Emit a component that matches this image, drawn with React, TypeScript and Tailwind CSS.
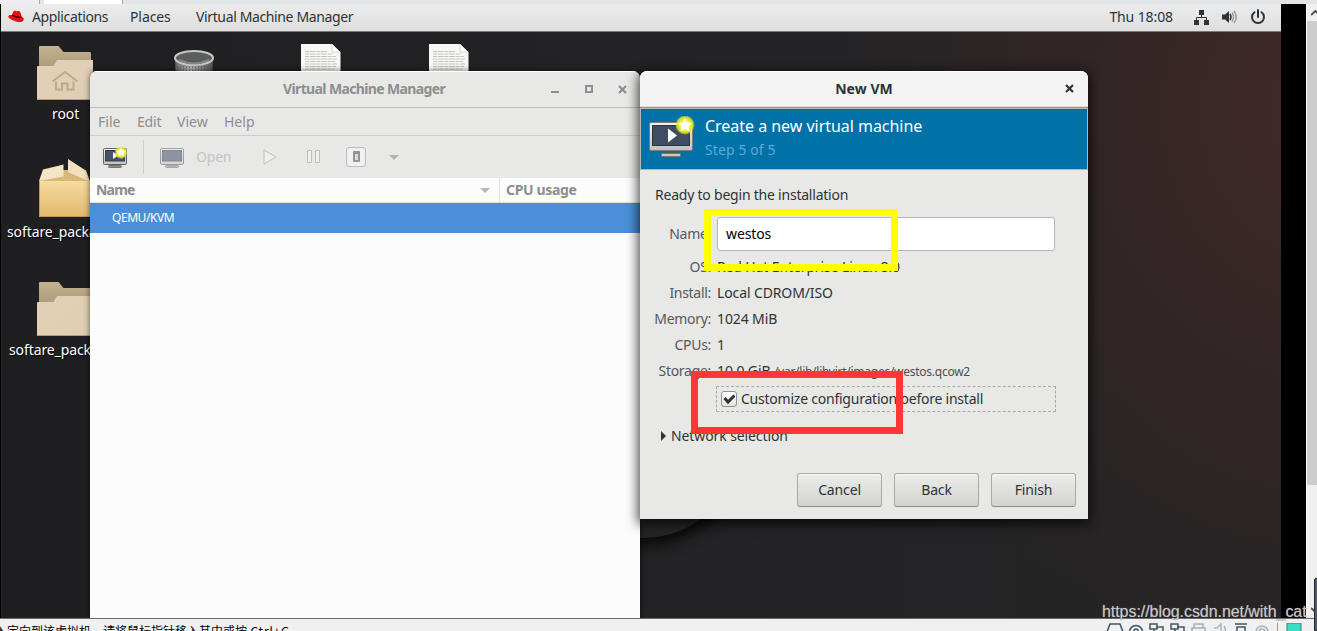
import type { ReactNode } from "react";

function HatIcon() {
  return (
    <svg className="h-[15px] w-[17px]" viewBox="0 0 17 15">
      <path
        d="M1 6.500c1-.6 2-.6 3-.3L5.200 3c.5-1.300 1.600-1.400 2.700-.9.700.3 1.200.2 1.900 0 1.300-.4 2.300.3 2.700 1.500l1.200 4.200c1.700.9 2.400 2.200 1.900 3.500-.7 1.700-3.300 2.200-6.600 1.400C4.400 11.600.7 9.500.3 7.800c-.1-.6.200-1 .7-1.300z"
        fill="#e8100d"
      />
      <path d="M3.900 6.300c2 2 6.700 3.400 9.900 2.300l-.2-.9C10.500 8.300 6.500 7 4.300 5.300z" fill="#1a0505" />
    </svg>
  );
}

function FolderIcon({ home = false }: { home?: boolean }) {
  return (
    <svg className="h-[56px] w-[57px]" viewBox="0 0 57 56">
      <defs>
        <linearGradient id="folderFront" x1="0" y1="0" x2="1" y2="1">
          <stop offset="0" stopColor="#e3d0b6" />
          <stop offset="1" stopColor="#dfceb5" />
        </linearGradient>
        <linearGradient id="folderBack" x1="0" y1="0" x2="0" y2="1">
          <stop offset="0" stopColor="#c3b18f" />
          <stop offset="1" stopColor="#ad9b7b" />
        </linearGradient>
      </defs>
      <path d="M2 22V1q0-1 1-1h18.500l5 6H53q1 0 1 1v15z" fill="url(#folderBack)" />
      <path d="M0 21q0-1 1-1h15.500l3.500-6h36v39q0 1-1 1H1q-1 0-1-1z" fill="url(#folderFront)" />
      <path d="M1 53.500h54" stroke="#b59a72" />
      {home && (
        <path
          d="M15.500 35.500 28 26 40.500 35.500M19 35.500v8h6v-6h5.500v6h6v-8"
          fill="none"
          stroke="#bea98a"
          strokeWidth="2"
        />
      )}
    </svg>
  );
}

function PackageIcon() {
  return (
    <svg className="h-[60px] w-[51px]" viewBox="0 0 51 60">
      <defs>
        <linearGradient id="box" x1="0" y1="0" x2="0" y2="1">
          <stop offset="0" stopColor="#f6dba1" />
          <stop offset="1" stopColor="#e2b96e" />
        </linearGradient>
      </defs>
      <path d="M1 23 5 12h42l4 11z" fill="#d8b878" />
      <path d="M0 23h51v36H0z" fill="url(#box)" />
      <path d="M.5 23v35.500H51" fill="none" stroke="#c39a54" />
      <path d="M4 11.500 24.500 6.500v12L0 23z" fill="#f6e4c6" />
      <path d="M29 1 46 12l4.500 11.500L29 14z" fill="#f3dfbd" />
    </svg>
  );
}

function TrashIcon() {
  return (
    <svg className="h-[30px] w-[42px]" viewBox="0 0 42 30">
      <defs>
        <linearGradient id="bin" x1="0" y1="0" x2="1" y2="0">
          <stop offset="0" stopColor="#5f6866" />
          <stop offset=".4" stopColor="#b3b7b5" />
          <stop offset="1" stopColor="#4d5353" />
        </linearGradient>
      </defs>
      <path d="M2 10h38l-1 20H3z" fill="url(#bin)" />
      <path d="M4 18h34M4 21h34" stroke="#4b504f" strokeDasharray="1 2" />
      <ellipse cx="21" cy="9" rx="19" ry="7" fill="#5b5e5d" stroke="#c7c9c7" strokeWidth="2" />
      <path d="M6 11q15 7 30 0" fill="none" stroke="#858887" strokeWidth="2" />
    </svg>
  );
}

function DocumentIcon() {
  return (
    <svg className="h-[30px] w-[41px]" viewBox="0 0 41 30">
      <path d="M1 0h31l8.500 8v22H1z" fill="#f8f8f6" />
      <path d="M32 0v8h8z" fill="#fff" stroke="#c8c8c6" strokeWidth=".7" />
      <path
        d="M5 7.500h22M5 10h28M5 12.500h31M5 15h32M5 17.500h30M5 20h32M5 22.500h31M5 25h30"
        stroke="#c2c2c0"
        strokeDasharray="4 .6 6 .7"
      />
    </svg>
  );
}

function MonitorDefs() {
  return (
    <defs>
      <linearGradient id="bezel" x1="0" y1="0" x2="0" y2="1">
        <stop offset="0" stopColor="#f5f5f5" />
        <stop offset="1" stopColor="#c2c2c2" />
      </linearGradient>
      <radialGradient id="glow">
        <stop offset=".55" stopColor="#f2f12c" />
        <stop offset=".8" stopColor="#e2e82c" stopOpacity=".85" />
        <stop offset="1" stopColor="#dfe52c" stopOpacity="0" />
      </radialGradient>
    </defs>
  );
}

function BannerIcon() {
  return (
    <svg className="mt-[7px] h-[43px] w-[47px]" viewBox="0 0 47 43">
      <MonitorDefs />
      <path d="M17 34h13v5H17z" fill="#555753" />
      <rect x="13.500" y="37.500" width="19" height="3" rx="1" fill="#c9c9c7" stroke="#777" />
      <rect x="1.500" y="6.500" width="43" height="28" rx="1.500" fill="url(#bezel)" stroke="#7b7c79" />
      <rect x="4.500" y="9.500" width="37" height="20" fill="#3f4c61" stroke="#2c3545" />
      <path d="m20 12.500 9 7-9 7z" fill="#fff" />
      <circle cx="37" cy="9" r="10" fill="url(#glow)" />
      <path d="m37 1.800 2.200 4.700 5 .6-3.700 3.400 1 5-4.500-2.500-4.500 2.500 1-5-3.700-3.400 5-.6z" fill="#fff" />
    </svg>
  );
}

function ToolbarMonitorIcon({ className, play = false }: { className: string; play?: boolean }) {
  return (
    <svg className={`h-6 w-[26px] ${className}`} viewBox="0 0 26 24">
      <MonitorDefs />
      <path d="M9 18.500h7v3H9z" fill="#8b8c89" />
      <rect x="6.500" y="20.500" width="13" height="2" rx=".8" fill="#8e8f8c" stroke="#666" strokeWidth=".8" />
      <rect x="1.500" y="3.500" width="23" height="16" rx="1" fill="url(#bezel)" stroke="#62635f" />
      <rect x="3.500" y="5.500" width="19" height="10.500" fill="#46536a" stroke="#333c4c" />
      {play && (
        <>
          <path d="M11 7v7l5-3.500z" fill="#fff" />
          <circle cx="19" cy="7.500" r="6.500" fill="url(#glow)" />
          <path d="m19 2.500 1.600 3 3.400.4-2.500 2.300.6 3.400L19 10l-3.100 1.600.6-3.400L14 5.900l3.400-.4z" fill="#fff" />
        </>
      )}
    </svg>
  );
}

function CloseIcon() {
  return (
    <svg className="h-[9px] w-[9px]" viewBox="0 0 9 9">
      <path d="m1 1 7 7m0-7L1 8" stroke="currentColor" strokeWidth="2.200" />
    </svg>
  );
}

function DesktopLabel({ className, children }: { className: string; children: ReactNode }) {
  return (
    <span
      className={`absolute text-sm leading-5 tracking-[-0.1px] whitespace-nowrap text-white [text-shadow:1px_1px_1px_#000] ${className}`}
    >
      {children}
    </span>
  );
}

function DesktopIcons() {
  return (
    <>
      <div className="absolute top-[42px] left-[37px]">
        <FolderIcon home />
      </div>
      <DesktopLabel className="top-[100px] left-[52px]">root</DesktopLabel>
      <div className="absolute top-[45px] left-[173px]">
        <TrashIcon />
      </div>
      <div className="absolute top-[40px] left-[300px]">
        <DocumentIcon />
      </div>
      <div className="absolute top-[40px] left-[428px]">
        <DocumentIcon />
      </div>
      <div className="absolute top-[154px] left-[39px]">
        <PackageIcon />
      </div>
      <DesktopLabel className="top-[218px] left-[7px]">softare_package</DesktopLabel>
      <div className="absolute top-[278px] left-[37px]">
        <FolderIcon />
      </div>
      <DesktopLabel className="top-[336px] left-[9px]">softare_package</DesktopLabel>
    </>
  );
}

function TopBar() {
  return (
    <header className="relative flex h-[28px] items-center border-b border-[#77777a] bg-linear-to-b from-[#ececec] to-[#dedede] pr-[15px] pb-[2px] pl-[8px] text-sm text-[#2e3436]">
      <HatIcon />
      <span className="ml-[7px] w-[98px] tracking-[-0.36px]">Applications</span>
      <span className="w-[66px] tracking-[-0.1px]">Places</span>
      <span className="tracking-[-0.37px]">Virtual Machine Manager</span>
      <span className="mr-[21px] ml-auto tracking-[-0.1px]">Thu 18:08</span>
      <svg className="h-4 w-[15px]" viewBox="0 0 15 16" fill="#2e3436">
        <path d="M5 1h5v5H5zM0 11h5v5H0zM10 11h5v5h-5z" />
        <path d="M7.500 5v4M2.500 11V8.500h10V11" fill="none" stroke="#2e3436" />
      </svg>
      <svg className="ml-[12px] h-4 w-4" viewBox="0 0 16 16">
        <path d="M1 5.500h3L8 2v12l-4-3.500H1z" fill="#2e3436" />
        <path d="M9 5q2 3 0 6" fill="none" stroke="#2e3436" strokeWidth="1.500" />
        <path d="M11 3.500q3 4.500 0 9M13 2q4.500 6 0 12" fill="none" stroke="#9a9c9c" strokeWidth="1.500" />
      </svg>
      <svg className="ml-[13px] h-4 w-4" viewBox="0 0 16 16" fill="none" stroke="#2e3436" strokeWidth="2">
        <path d="M4.500 3.200a6 6 0 1 0 7 0M8 1v7" strokeLinecap="round" />
      </svg>
    </header>
  );
}

function ManagerWindow() {
  return (
    <section className="absolute top-[67px] left-[90px] flex h-[547px] w-[550px] flex-col overflow-hidden rounded-t-[7px] bg-[#e8e8e7] text-sm text-[#8b8e8f] shadow-[0_0_6px_#0009]">
      <div className="flex h-[37px] items-center border-t border-b border-t-white border-b-[#bcbcba] pr-[13px] pb-px">
        <span className="ml-[193px] font-bold tracking-[-0.63px]">Virtual Machine Manager</span>
        <span className="mt-[6px] ml-auto h-[2px] w-2 bg-[#8b8e8f]" />
        <span className="mr-[25px] ml-[26px] h-2 w-2 border-2 border-[#8b8e8f]" />
        <CloseIcon />
      </div>
      <nav className="flex h-[28px] items-center border-b border-[#cececc] pl-2">
        <span className="w-[39px]">File</span>
        <span className="w-[40px] tracking-[-0.2px]">Edit</span>
        <span className="w-[47px]">View</span>
        <span>Help</span>
      </nav>
      <div className="flex h-[42px] items-center pb-px pl-[12px] text-[#c2c4c3]">
        <ToolbarMonitorIcon className="" play />
        <span className="ml-[15px] h-[34px] w-px bg-[#d0d0ce]" />
        <ToolbarMonitorIcon className="ml-[15px] opacity-55" />
        <span className="ml-[11px] w-[67px] tracking-[-0.2px]">Open</span>
        <svg className="h-4 w-[14px]" viewBox="0 0 14 16" fill="#efefee" stroke="#bcbebd">
          <path d="M1 1v14l12-7z" />
        </svg>
        <svg className="ml-[30px] h-[13px] w-[13px]" viewBox="0 0 13 13" fill="#efefee" stroke="#bcbebd">
          <path d="M.5.5h4v12h-4zM8.500.5h4v12h-4z" />
        </svg>
        <span className="ml-[26px] flex h-5 w-5 items-center justify-center rounded-[3px] border border-[#bdbdbd] bg-[#f0f0f0]">
          <span className="h-[11px] w-[7px] rounded-[1px] border-2 border-t-[3px] border-[#8f9497] bg-[#d9dbdb]" />
        </span>
        <svg className="mt-px ml-[23px] h-[5px] w-[10px]" viewBox="0 0 10 5">
          <path d="M0 0h10L5 5z" fill="#b1b3b3" />
        </svg>
      </div>
      <div className="flex h-[25px] items-center border-b border-[#e3e1dd] bg-[#fcfcfc] font-bold">
        <span className="flex w-[410px] items-center justify-between self-stretch border-r border-[#e3e3e1] pr-[9px] pl-[6px]">
          <span className="tracking-[-0.8px]">Name</span>
          <svg className="h-[5px] w-[10px]" viewBox="0 0 10 5">
            <path d="M0 0h10L5 5z" fill="#b4b6b6" />
          </svg>
        </span>
        <span className="ml-[6px] tracking-[-0.35px]">CPU usage</span>
      </div>
      <div className="flex h-[30px] items-center bg-[#4a90d9] pl-[22px] text-xs tracking-[-0.45px] text-white">
        QEMU/KVM
      </div>
      <div className="flex-1 bg-[#fcfcfc]" />
    </section>
  );
}

function DetailRow({ label, children }: { label: string; children: ReactNode }) {
  return (
    <>
      <span className="justify-self-end tracking-[-0.3px] whitespace-nowrap text-[#555a5b]">{label}</span>
      <span>{children}</span>
    </>
  );
}

function DialogButton({ children }: { children: ReactNode }) {
  return (
    <button className="h-[34px] w-[85px] rounded-[3px] border border-[#a9aaa7] border-b-[#8b8d8a] bg-linear-to-b from-[#ededec] to-[#d2d2d0] tracking-[-0.15px] shadow-[inset_0_1px_#fafafa]">
      {children}
    </button>
  );
}

function NewVmDialog() {
  return (
    <section className="absolute top-[67px] left-[640px] flex h-[448px] w-[448px] flex-col rounded-t-[7px] bg-[#e8e8e6] text-sm text-[#2e3436] shadow-[0_3px_12px_2px_#000b]">
      <div className="relative flex h-[37px] items-center justify-center rounded-t-[7px] border-t border-b border-t-white border-b-[#959692] bg-[#f4f4f4] pb-[2px] font-bold shadow-[inset_0_-1px_#dededc]">
        <span className="tracking-[0.05px]">New VM</span>
        <span className="absolute right-[14px]">
          <CloseIcon />
        </span>
      </div>
      <div className="flex h-[62px] border border-[#b6b7b2] bg-[#0072a8] pl-[7px]">
        <BannerIcon />
        <div className="ml-[10px] text-white">
          <h1 className="mt-[5px] text-base leading-6 tracking-[-0.03px]">Create a new virtual machine</h1>
          <p className="mt-px leading-[22px] tracking-[0.1px] text-[#5caadb]">Step 5 of 5</p>
        </div>
      </div>
      <div className="flex flex-1 flex-col pr-[12px] pl-[15px]">
        <p className="mt-[15px] leading-5 tracking-[-0.22px]">Ready to begin the installation</p>
        <div className="mt-[9px] grid grid-cols-[56px_338px] grid-rows-[40px_repeat(5,26px)] items-center gap-x-[6px] tracking-[-0.12px]">
          <DetailRow label="Name:">
            <span className="flex h-[34px] items-center rounded-[3px] border border-[#b5b6b2] bg-white pl-2 text-black">
              westos
            </span>
          </DetailRow>
          <DetailRow label="OS:">Red Hat Enterprise Linux 8.0</DetailRow>
          <DetailRow label="Install:">Local CDROM/ISO</DetailRow>
          <DetailRow label="Memory:">1024 MiB</DetailRow>
          <DetailRow label="CPUs:">1</DetailRow>
          <DetailRow label="Storage:">
            10.0 GiB{" "}
            <span className="text-xs tracking-[-0.26px] text-[#4a4f50]">/var/lib/libvirt/images/westos.qcow2</span>
          </DetailRow>
        </div>
        <label className="mt-[2px] ml-[61px] flex h-[26px] w-[340px] items-center border border-dashed border-[#aaaba8] pl-1 tracking-[-0.23px]">
          <span className="mr-[4px] flex h-4 w-4 items-center justify-center rounded-[3px] border border-[#8f918e] bg-linear-to-b from-white to-[#e4e4e2]">
            <svg className="h-3 w-3" viewBox="0 0 12 12">
              <path d="m1.500 5 3.500 4 6.500-6.500" fill="none" stroke="#2e3436" strokeWidth="3" />
            </svg>
          </span>
          Customize configuration before install
        </label>
        <div className="mt-[14px] flex items-center leading-5 tracking-[-0.1px]">
          <svg className="mr-[5px] ml-[6px] h-[10px] w-[5px]" viewBox="0 0 5 10">
            <path d="M0 0v10l5-5z" fill="#2e3436" />
          </svg>
          Network selection
        </div>
        <div className="mt-[27px] flex justify-end gap-[12px]">
          <DialogButton>Cancel</DialogButton>
          <DialogButton>Back</DialogButton>
          <DialogButton>Finish</DialogButton>
        </div>
      </div>
    </section>
  );
}

function HostStatusBar() {
  return (
    <footer className="relative flex h-[13px] overflow-hidden border-t border-[#6a6a6a] bg-[#f0f0f0]">
      <span className="-ml-[5px] pt-[4px] font-['Noto_Sans_CJK_SC',sans-serif] text-xs leading-[15px] whitespace-nowrap text-black">
        入定向到该虚拟机，请将鼠标指针移入其中或按<span className="tracking-[0.8px]"> Ctrl+G</span>
      </span>
      <svg
        className="absolute top-[4px] left-[1106px] h-[9px] w-[211px]"
        viewBox="0 0 211 9"
        fill="none"
        stroke="#3e5566"
        strokeWidth="1.500"
      >
        <path d="M4 1h10l3 8H1zM23.500 9a6.500 6.500 0 0 1 13 0M28 8a2 2 0 1 1 4 0" />
        <path d="M44 1h7v5h-7zM50 4h7v5M65 1h7v5h-7zM71 4h7v5M48 6v3M69 6v3" />
        <path d="M88 5V1h9v4M86 9V5h13v4" stroke="#a4afb7" />
        <path d="M108 5h3l4-4v8M118 3q2 3 1 6" stroke="#aab3ba" />
        <path d="M129 1h12M131 4h8v5h-8z" />
        <path d="M150 9a6 6 0 0 1 12 0M153 9a3 3 0 0 1 6 0" stroke="#aab3ba" />
        <path d="M171.500 0v9" stroke="#9a9a9a" strokeWidth="1" />
        <path d="M181 0h14v9h-14z" fill="#38dfc5" stroke="#447a7a" strokeWidth="1" />
      </svg>
    </footer>
  );
}

export default function App() {
  return (
    <main className="relative flex h-[631px] w-[1317px] flex-col overflow-hidden bg-white font-['Noto_Sans','Open_Sans',sans-serif]">
      <div className="flex h-[4px] bg-[#e2e5e8]">
        <span className="w-10 border-r border-[#a5a8ab] bg-[#eceef1]" />
        <span className="ml-1 w-[78px] bg-white" />
        <span className="w-px bg-[#a5a8ab]" />
      </div>
      <div className="flex h-[614px]">
        <div className="relative w-[1281px] overflow-hidden border-l border-black bg-[radial-gradient(ellipse_500px_560px_at_1330px_110px,#432926_0%,#2f2526_55%,transparent_100%),linear-gradient(90deg,#1f1f21,#242426_60%,#262425)]">
          <div className="absolute top-0 -left-px h-full w-[1281px]">
            <TopBar />
            <DesktopIcons />
            <div className="absolute top-[336px] left-[544px] h-[198px] w-[198px] rounded-full bg-[#232526] shadow-[0_8px_14px_#0d0808]" />
            <ManagerWindow />
            <NewVmDialog />
          </div>
        </div>
        <div className="w-[25px] bg-black" />
        <div className="relative flex-1 border-l border-white bg-[#f0f0f0]">
          <svg
            className="absolute top-[6px] left-[4px] h-[6px] w-[10px]"
            viewBox="0 0 10 6"
            fill="none"
            stroke="#505050"
            strokeWidth="2"
          >
            <path d="m0 5 4.500-4L9 5" />
          </svg>
          <div className="mt-[17px] h-[464px] bg-[#cdcdcd]" />
          <svg
            className="absolute top-[603px] left-[4px] h-[6px] w-[10px]"
            viewBox="0 0 10 6"
            fill="none"
            stroke="#505050"
            strokeWidth="2"
          >
            <path d="m0 1 4.500 4L9 1" />
          </svg>
        </div>
      </div>
      <HostStatusBar />
      <div className="absolute top-[578px] left-[1314px] h-[53px] w-[5px] rounded-tl-[2px] border border-[#25262d] bg-[#555a6b]" />
      <div className="absolute top-[209px] left-[704px] h-[62px] w-[194px] border-[7px] border-[#ffff00]" />
      <div className="absolute top-[371px] left-[691px] h-[63px] w-[212px] border-[7px] border-[#fd3736]" />
      <span className="absolute top-[602px] left-[1102px] font-['Liberation_Sans',sans-serif] text-base leading-5 tracking-[-0.06px] whitespace-nowrap text-[#c9c8c8] [text-shadow:0_0_1px_#777]">
        https://blog.csdn.net/with_cat
      </span>
    </main>
  );
}
